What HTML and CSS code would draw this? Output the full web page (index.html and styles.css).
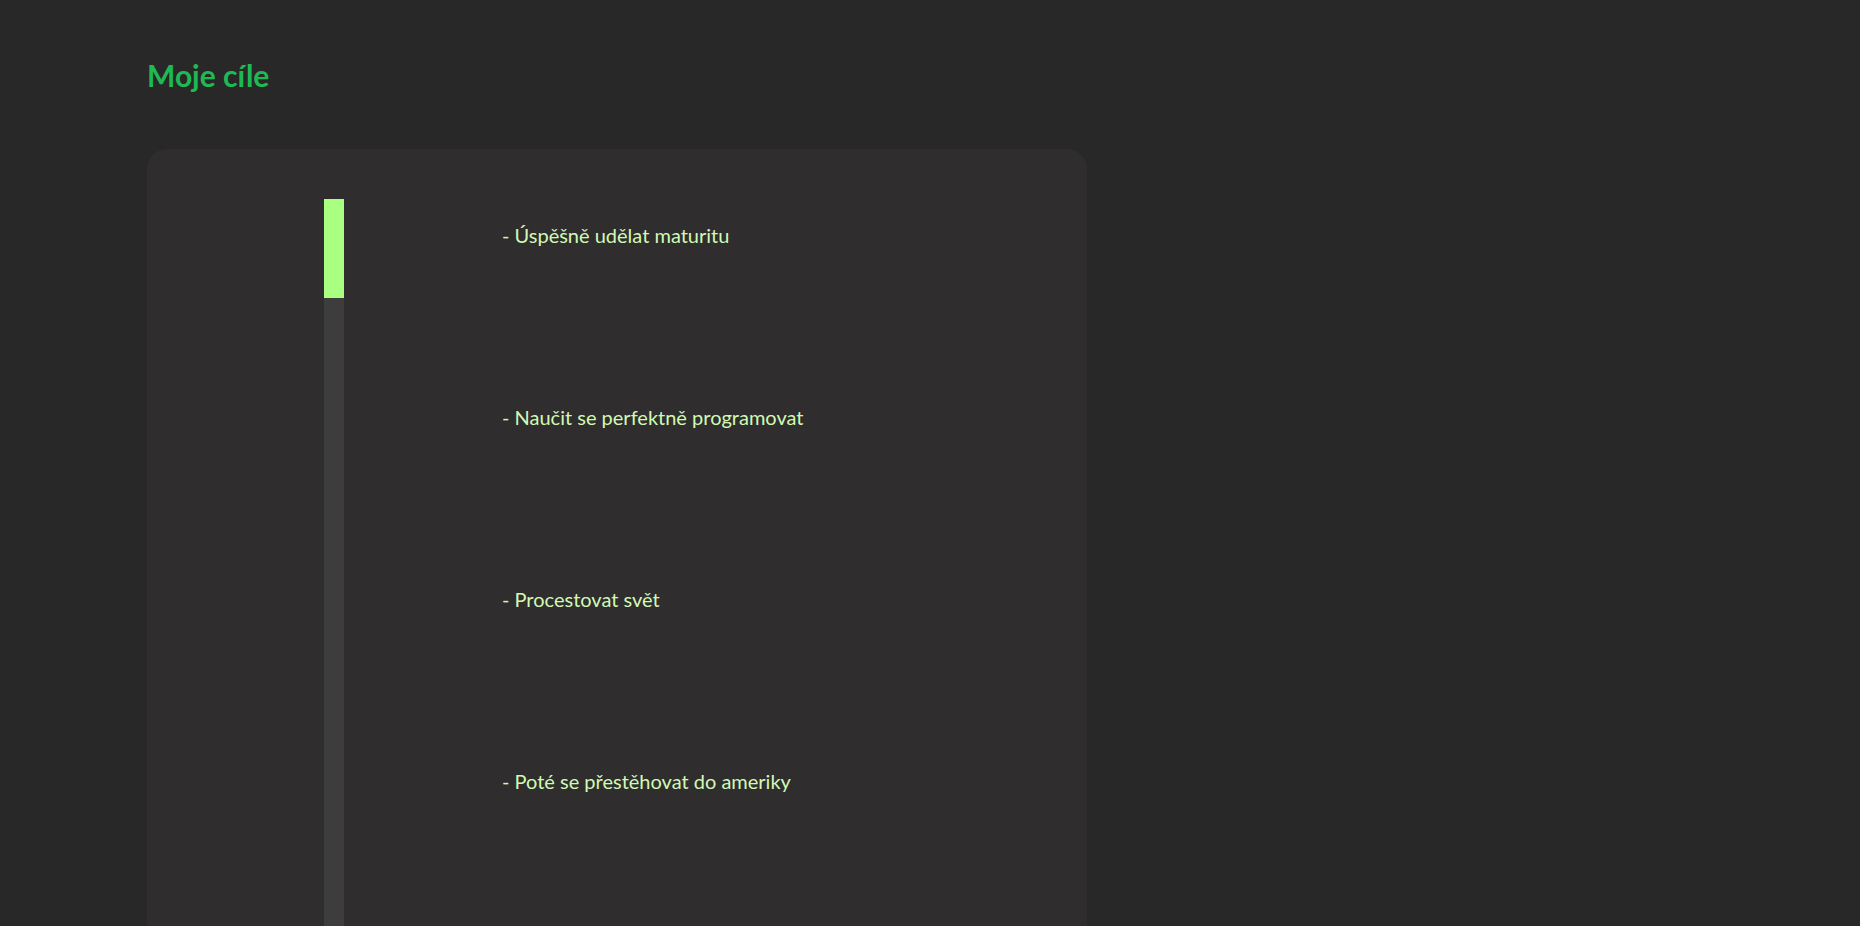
FILE: index.html
```html
<!DOCTYPE html>
<html lang="cs">
<head>
<meta charset="utf-8">
<title>Moje cíle</title>
<link rel="stylesheet" href="styles.css">
</head>
<body>
<main class="page">
  <h1 class="title">Moje cíle</h1>
  <section class="card">
    <div class="track"><div class="fill"></div></div>
    <ul class="goals">
      <li class="goal">- Úspěšně udělat maturitu</li>
      <li class="goal">- Naučit se perfektně programovat</li>
      <li class="goal">- Procestovat svět</li>
      <li class="goal">- Poté se přestěhovat do ameriky</li>
    </ul>
  </section>
</main>
</body>
</html>
```
FILE: styles.css
```css
html, body {
  margin: 0;
  padding: 0;
  background: #282828;
  overflow: hidden;
}
.page {
  padding: 0 0 0 147px;
  font-family: Lato, "Noto Sans", sans-serif;
}
.title {
  margin: 0;
  padding-top: 57px;
  font-size: 30px;
  line-height: 36px;
  font-weight: 700;
  color: #1fb954;
}
.card {
  margin-top: 56px;
  width: 940px;
  height: 1000px;
  box-sizing: border-box;
  background: #2f2d2e;
  border-radius: 20px;
  padding: 50px 0 0 177px;
  display: flex;
  gap: 158px;
}
.track {
  width: 20px;
  flex: none;
  background: #3d3d3d;
  align-self: stretch;
}
.fill {
  height: 99px;
  background: #a9ff7f;
}
.goals {
  list-style: none;
  margin: 0;
  padding: 21px 0 0 0;
  display: flex;
  flex-direction: column;
  gap: 152px;
}
.goal {
  font-size: 20px;
  line-height: 30px;
  color: #d2f9b4;
}
```
